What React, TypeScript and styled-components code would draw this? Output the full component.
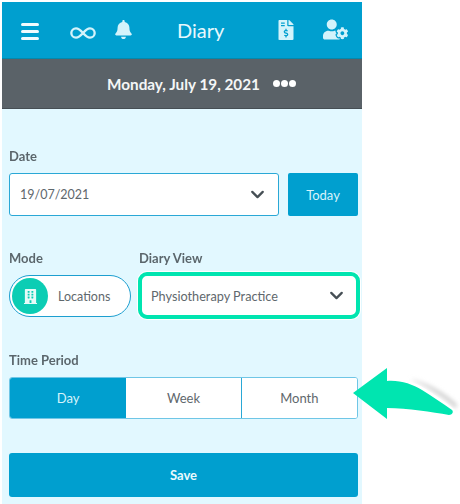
import React from 'react'
import styled, { createGlobalStyle } from 'styled-components'
import { FaBell, FaBuilding, FaFileInvoiceDollar, FaUserCog } from 'react-icons/fa'
import { ChevronDown, Infinity as InfinityIcon } from 'lucide-react'

const blue = '#009fcf'
const teal = '#00e5b0'

const Global = createGlobalStyle`
    html, body {
        margin: 0;
        padding: 0;
        background: #fff;
        font-family: Lato, "Open Sans", sans-serif;
    }
`

const App = () => {
    return (
        <Page>
            <Global />
            <Phone>
                <Header>
                    <Burger>
                        <span />
                        <span />
                        <span />
                    </Burger>
                    <InfinitySlot>
                        <InfinityIcon size={28} strokeWidth={2} />
                    </InfinitySlot>
                    <BellSlot>
                        <FaBell size={19} />
                    </BellSlot>
                    <Title>Diary</Title>
                    <DocSlot>
                        <FaFileInvoiceDollar size={20} />
                    </DocSlot>
                    <UserSlot>
                        <FaUserCog size={25} />
                    </UserSlot>
                </Header>
                <DateBar>
                    <DateText>Monday, July 19, 2021</DateText>
                    <Dots>
                        <i />
                        <i />
                        <i />
                    </Dots>
                </DateBar>
                <Content>
                    <Label>Date</Label>
                    <DateRow>
                        <DateField>
                            19/07/2021
                            <ChevronDown size={21} strokeWidth={2.6} color="#464f55" />
                        </DateField>
                        <TodayButton>Today</TodayButton>
                    </DateRow>
                    <ModeRow>
                        <ModeCol>
                            <Label>Mode</Label>
                            <Toggle>
                                <Knob>
                                    <FaBuilding size={15} />
                                </Knob>
                                Locations
                            </Toggle>
                        </ModeCol>
                        <ViewCol>
                            <ViewLabel>Diary View</ViewLabel>
                            <ViewSelect>
                                Physiotherapy Practice
                                <ChevronDown size={21} strokeWidth={2.6} color="#464f55" />
                            </ViewSelect>
                        </ViewCol>
                    </ModeRow>
                    <PeriodLabel>Time Period</PeriodLabel>
                    <Segments>
                        <Segment $active $width={117}>Day</Segment>
                        <Segment $width={115}>Week</Segment>
                        <Segment $divider $width={117}>Month</Segment>
                    </Segments>
                    <SaveButton>Save</SaveButton>
                </Content>
            </Phone>
            <Arrow viewBox="0 0 112 60" width="112" height="60">
                <defs>
                    <filter id="arrowBlur" x="-20%" y="-20%" width="140%" height="140%">
                        <feGaussianBlur stdDeviation="2" />
                    </filter>
                </defs>
                <path d="M58 12 C78 16 94 27 105 37 L104 42 C92 31 76 20 58 12 Z" fill="#d2d2d2" filter="url(#arrowBlur)" />
                <path
                    d="M36 12 C50 11 62 15 72 21 C82 27 92 34 103 43 L100 47 L36 43 Z"
                    fill="#fff"
                />
                <path
                    d="M1 26 L35 1 L35 14 C48 13 60 17 70 23 C80 29 90 36 100 43 C102 45 100 48 97 48 C80 45 56 41 35 41 L35 52 Z"
                    fill={teal}
                />
            </Arrow>
        </Page>
    )
}

export default App

const Page = styled.div`
    position: relative;
    width: 460px;
    height: 504px;
    padding: 2px 0 0 2px;
    box-sizing: border-box;
    overflow: hidden;
    background: #fff;
`
const Phone = styled.div`
    width: 360px;
    height: 502px;
    display: flex;
    flex-direction: column;
`
const Header = styled.div`
    height: 57px;
    flex-shrink: 0;
    background-color: ${blue};
    border-bottom: 1px solid #0389ad;
    box-sizing: border-box;
    display: flex;
    align-items: center;
    color: #d3f3fb;
`
const Burger = styled.div`
    width: 18px;
    margin-left: 19px;
    margin-top: 3px;
    display: flex;
    flex-direction: column;
    gap: 4px;
    span {
        display: block;
        height: 3px;
        border-radius: 2px;
        background: #f1fbfe;
    }
`
const InfinitySlot = styled.div`
    margin-left: 30px;
    margin-top: 5px;
    display: flex;
`
const BellSlot = styled.div`
    margin-left: 17px;
    margin-top: -2px;
    display: flex;
`
const Title = styled.div`
    width: 52px;
    margin-left: 44px;
    font-size: 20px;
    color: #e6f8fd;
`
const DocSlot = styled.div`
    margin-left: 47px;
    margin-top: -1px;
    display: flex;
`
const UserSlot = styled.div`
    margin-left: 27px;
    margin-top: -1px;
    display: flex;
`
const DateBar = styled.div`
    height: 50px;
    flex-shrink: 0;
    background-color: #5a6268;
    border-bottom: 1px solid #464e54;
    box-sizing: border-box;
    display: flex;
    align-items: center;
    padding-left: 105px;
    color: #fff;
`
const DateText = styled.div`
    font-size: 15.3px;
    font-weight: 700;
    color: #f4f6f6;
`
const Dots = styled.div`
    margin-left: 13px;
    display: flex;
    gap: 1px;
    i {
        width: 7px;
        height: 7px;
        border-radius: 50%;
        background: #fff;
    }
`
const Content = styled.div`
    flex: 1;
    background-color: #e2f8ff;
    padding: 39px 2px 0 7px;
    display: flex;
    flex-direction: column;
    color: #4b555b;
`
const Label = styled.div`
    font-size: 13px;
    line-height: 16px;
    font-weight: 700;
    color: #505a60;
    opacity: 0.92;
`
const DateRow = styled.div`
    margin-top: 9px;
    display: flex;
    gap: 9px;
`
const DateField = styled.div`
    width: 270px;
    height: 43px;
    box-sizing: border-box;
    background: #fff;
    border: 1px solid #2aa8d6;
    border-radius: 3px;
    display: flex;
    align-items: center;
    justify-content: space-between;
    padding: 0 10px 0 10px;
    font-size: 12.5px;
    color: #5f686d;
`
const TodayButton = styled.div`
    width: 70px;
    height: 43px;
    background-color: ${blue};
    border-radius: 2px;
    display: flex;
    align-items: center;
    justify-content: center;
    font-size: 13px;
    color: #d6f3fb;
`
const ModeRow = styled.div`
    margin-top: 34px;
    display: flex;
`
const ModeCol = styled.div`
    width: 122px;
    display: flex;
    flex-direction: column;
`
const ViewCol = styled.div`
    margin-left: 7px;
    width: 222px;
    display: flex;
    flex-direction: column;
`
const ViewLabel = styled(Label)`
    margin-left: 1px;
`
const Toggle = styled.div`
    margin-top: 9px;
    width: 122px;
    height: 42px;
    box-sizing: border-box;
    background: #fff;
    border: 1px solid #1d9fd0;
    border-radius: 21px;
    padding-left: 2px;
    display: flex;
    align-items: center;
    gap: 10px;
    font-size: 12.5px;
    color: #5f686d;
`
const Knob = styled.div`
    width: 36px;
    height: 36px;
    border-radius: 50%;
    background-color: #0ccdb4;
    color: #e6fbf8;
    display: flex;
    align-items: center;
    justify-content: center;
`
const ViewSelect = styled.div`
    margin-top: 6px;
    width: 222px;
    height: 47px;
    box-sizing: border-box;
    background: #fff;
    border: 4px solid ${teal};
    border-radius: 9px;
    box-shadow: 0 0 0 1px #fff;
    display: flex;
    align-items: center;
    justify-content: space-between;
    padding: 0 9px 0 9px;
    font-size: 12.7px;
    color: #5f686d;
`
const PeriodLabel = styled(Label)`
    margin-top: 33px;
`
const Segments = styled.div`
    margin-top: 9px;
    width: 349px;
    height: 42px;
    box-sizing: border-box;
    display: flex;
    background: #fff;
    border: 1px solid #6fc6e6;
    border-radius: 3px;
    overflow: hidden;
`
const Segment = styled.div<{ $active?: boolean; $divider?: boolean; $width: number }>`
    width: ${(p) => p.$width}px;
    box-sizing: border-box;
    display: flex;
    align-items: center;
    justify-content: center;
    font-size: 13px;
    background-color: ${(p) => (p.$active ? blue : '#fff')};
    color: ${(p) => (p.$active ? '#d6f3fb' : '#5f686d')};
    border-left: ${(p) => (p.$divider ? '1px solid #2aa8d6' : 'none')};
`
const SaveButton = styled.div`
    margin-top: 34px;
    width: 349px;
    height: 44px;
    background-color: ${blue};
    border-radius: 3px;
    display: flex;
    align-items: center;
    justify-content: center;
    font-size: 13px;
    font-weight: 700;
    color: #eafafe;
`
const Arrow = styled.svg`
    position: absolute;
    left: 352px;
    top: 367px;
`
